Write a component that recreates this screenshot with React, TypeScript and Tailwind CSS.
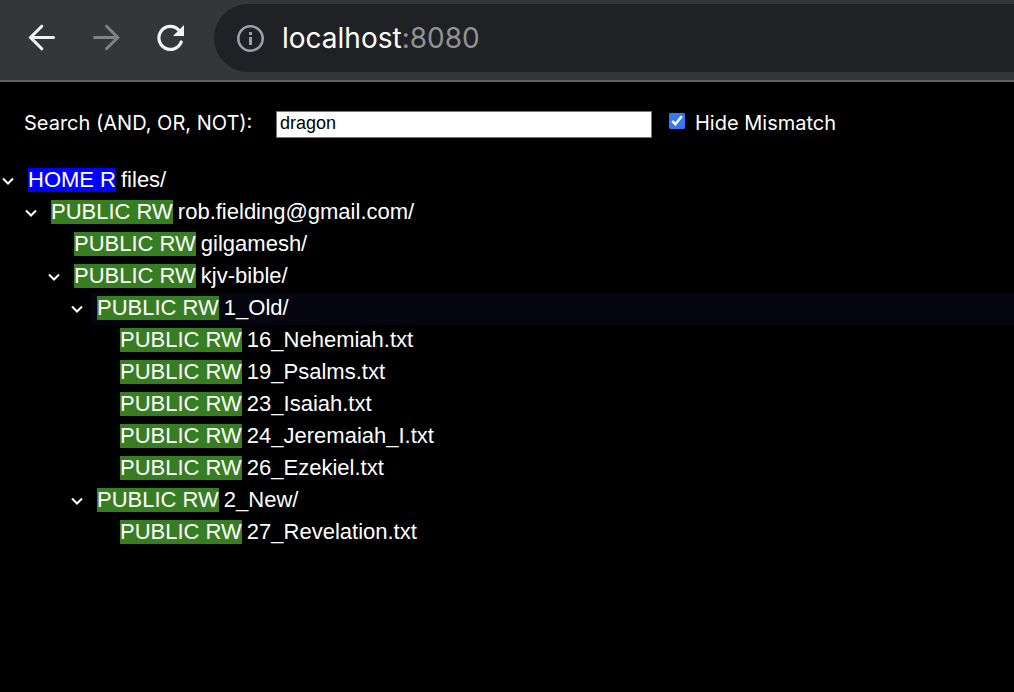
import { useState } from "react";

type Entry = {
  name: string;
  access: "HOME R" | "PUBLIC RW";
  selected?: boolean;
  children?: Entry[];
};

const file = (name: string): Entry => ({ name, access: "PUBLIC RW" });

const root: Entry = {
  name: "files/",
  access: "HOME R",
  children: [
    {
      name: "rob.fielding@gmail.com/",
      access: "PUBLIC RW",
      children: [
        file("gilgamesh/"),
        {
          name: "kjv-bible/",
          access: "PUBLIC RW",
          children: [
            {
              name: "1_Old/",
              access: "PUBLIC RW",
              selected: true,
              children: [
                file("16_Nehemiah.txt"),
                file("19_Psalms.txt"),
                file("23_Isaiah.txt"),
                file("24_Jeremaiah_I.txt"),
                file("26_Ezekiel.txt"),
              ],
            },
            {
              name: "2_New/",
              access: "PUBLIC RW",
              children: [file("27_Revelation.txt")],
            },
          ],
        },
      ],
    },
  ],
};

function Chevron({ open }: { open: boolean }) {
  return (
    <svg
      viewBox="0 0 16 32"
      className={open ? "h-8 w-4" : "h-8 w-4 -rotate-90"}
      fill="none"
      stroke="#ffffff"
      strokeWidth="2"
      aria-hidden="true"
    >
      <path d="M3 13.5 8 18.5 13 13.5" />
    </svg>
  );
}

function TreeNode({ entry }: { entry: Entry }) {
  const [open, setOpen] = useState(true);
  return (
    <li>
      <div className="flex h-8 items-center">
        {entry.children ? (
          <button
            type="button"
            className="flex w-[22px] shrink-0"
            aria-expanded={open}
            aria-label={entry.name}
            onClick={() => setOpen(!open)}
          >
            <Chevron open={open} />
          </button>
        ) : (
          <span className="w-[22px] shrink-0" />
        )}
        <div
          className={
            entry.selected
              ? "flex h-8 grow items-start gap-[5px] bg-[#05050f] pt-[3px] pl-1.5"
              : "flex h-8 grow items-start gap-[5px] pt-[3px] pl-1.5"
          }
        >
          <span
            className={
              entry.access === "HOME R"
                ? "bg-[#0000ff] leading-6 whitespace-nowrap"
                : "bg-[#377e22] leading-6 whitespace-nowrap"
            }
          >
            {entry.access}
          </span>
          <span className="leading-6">{entry.name}</span>
        </div>
      </div>
      {entry.children && open && (
        <ul className="pl-[23px]">
          {entry.children.map((child) => (
            <TreeNode key={child.name} entry={child} />
          ))}
        </ul>
      )}
    </li>
  );
}

function BrowserBar() {
  return (
    <header className="flex h-[82px] items-start border-b-2 border-[#5f6064] bg-[#35363a] pt-1">
      <nav className="flex h-[68px] w-[214px] shrink-0 items-center gap-6 pl-[22px]">
        <button type="button" aria-label="Back">
          <svg viewBox="0 0 40 40" className="size-10" fill="none" stroke="#f1f3f4" strokeWidth="3" strokeLinecap="round">
            <path d="M31.5 19.5H8.5M19.8 8.2 8.5 19.5 19.8 30.8" />
          </svg>
        </button>
        <button type="button" aria-label="Forward">
          <svg viewBox="0 0 40 40" className="size-10" fill="none" stroke="#818285" strokeWidth="3" strokeLinecap="round">
            <path d="M8.5 19.5h23M20.5 8.2 31.8 19.5 20.5 30.8" />
          </svg>
        </button>
        <button type="button" aria-label="Reload">
          <svg viewBox="0 0 40 40" className="size-10" fill="none" stroke="#f1f3f4" strokeWidth="3.2" strokeLinecap="round">
            <path d="M31.2 24A11.5 11.5 0 1 1 28.6 11.8" />
            <path d="M34 7v11H23z" fill="#f1f3f4" stroke="none" />
          </svg>
        </button>
      </nav>
      <div className="flex h-[68px] grow items-center gap-[18px] rounded-l-full bg-[#202124] pl-[22px]">
        <svg viewBox="0 0 28 28" className="size-7" fill="none" stroke="#9aa0a6" strokeWidth="2.6" aria-hidden="true">
          <circle cx="14.5" cy="14.5" r="12.2" />
          <path d="M14.5 13v8M14.5 8v3" strokeWidth="3" />
        </svg>
        <p className="font-['Inter',sans-serif] text-[28px] leading-9 text-white">
          localhost<span className="text-[#919294]">:8080</span>
        </p>
      </div>
    </header>
  );
}

export default function App() {
  const [query, setQuery] = useState("dragon");
  const [hide, setHide] = useState(true);
  return (
    <div className="min-h-screen bg-black text-white">
      <BrowserBar />
      <main>
        <form
          className="flex items-start px-6 pt-[27px] font-['Inter',sans-serif] text-xl leading-7"
          onSubmit={(event) => event.preventDefault()}
        >
          <label htmlFor="search" className="w-[252px] shrink-0">
            Search (AND, OR, NOT):
          </label>
          <input
            id="search"
            type="text"
            value={query}
            onChange={(event) => setQuery(event.target.value)}
            className="mt-0.5 h-[27px] w-[376px] border border-[#767676] bg-white px-[3px] pb-0.5 font-['Liberation_Sans',sans-serif] text-lg leading-6 text-black"
          />
          <input
            id="hide"
            type="checkbox"
            checked={hide}
            onChange={(event) => setHide(event.target.checked)}
            className="mt-1 ml-[17px] size-4 accent-[#3478f6]"
          />
          <label htmlFor="hide" className="ml-2.5">
            Hide Mismatch
          </label>
        </form>
        <ul className="pt-[27px] font-['Liberation_Sans',sans-serif] text-[22px]">
          <TreeNode entry={root} />
        </ul>
      </main>
    </div>
  );
}
